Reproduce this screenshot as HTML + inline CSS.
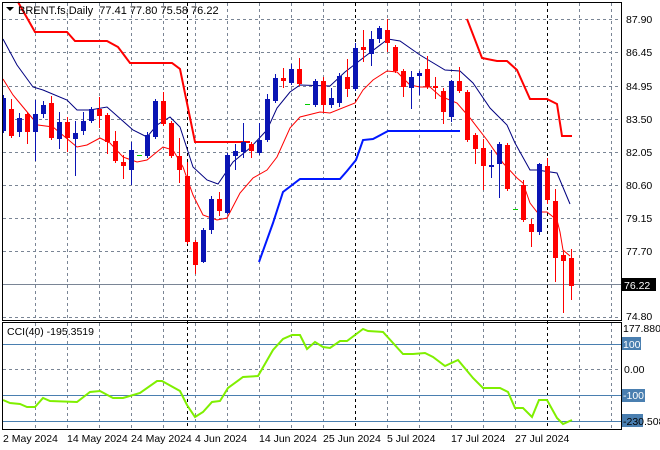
<!DOCTYPE html>
<html><head><meta charset="utf-8"><style>
html,body{margin:0;padding:0;background:#fff;}
svg{display:block;font-family:"Liberation Sans",sans-serif;}
</style></head><body>
<svg width="660" height="450" viewBox="0 0 660 450" xmlns="http://www.w3.org/2000/svg">
<rect width="660" height="450" fill="#fff"/>
<g stroke="#7a8595" stroke-width="1" stroke-dasharray="3,3" shape-rendering="crispEdges">
<path d="M35.5 3V320M67.5 3V320M99.5 3V320M131.5 3V320M163.5 3V320M195.5 3V320M227.5 3V320M259.5 3V320M291.5 3V320M323.5 3V320M387.5 3V320M419.5 3V320M451.5 3V320M483.5 3V320M515.5 3V320M579.5 3V320M611.5 3V320"/>
<path d="M35.5 323V429M67.5 323V429M99.5 323V429M131.5 323V429M163.5 323V429M195.5 323V429M227.5 323V429M259.5 323V429M291.5 323V429M323.5 323V429M387.5 323V429M419.5 323V429M451.5 323V429M483.5 323V429M515.5 323V429M579.5 323V429M611.5 323V429"/>
<path d="M3 19.5H621M3 52.5H621M3 86.5H621M3 119.5H621M3 152.5H621M3 185.5H621M3 218.5H621M3 251.5H621M3 317.5H621M3 369.5H621"/>
</g>
<g stroke="#000" stroke-dasharray="3,3" shape-rendering="crispEdges">
<path d="M187.5 3V429M355.5 3V429M547.5 3V429"/>
</g>
<path d="M3 284.5H621" stroke="#7a8595" shape-rendering="crispEdges"/>
<g stroke="#4a7fb0" shape-rendering="crispEdges"><path d="M3 344.5H621M3 395.5H621M3 421.5H621"/></g>
<polyline fill="none" stroke="#f00" stroke-width="2" points="18,2 35,32 67,32 75,41 107,41 118,47 130,63 172,63 180,69 195,142 250,142"/>
<polyline fill="none" stroke="#f00" stroke-width="2" points="467,19 482,58 497,61 507,61 517,70 530,99 547,99 557,104 562,136 572,136"/>
<polyline fill="none" stroke="#0018ff" stroke-width="2" points="259,262 273,223 283,192 300,179 340,179 347,171 356,160 363,140 373,139 388,131 460,131"/>
<polyline fill="none" stroke="#000080" stroke-width="1" points="3,39 17,65 33,87 43,90 67,100 77,110 90,110 107,107 133,130 147,137 157,125 170,117 180,127 193,167 207,180 218,184 233,162 250,148 267,130 277,108 290,92 300,85 330,86 345,72 363,58 388,39 400,41 420,55 445,70 460,71 473,83 490,108 507,125 515,143 530,170 537,170 557,173 570,204"/>
<polyline fill="none" stroke="#f00" stroke-width="1" points="3,79 13,95 23,107 38,125 53,127 65,137 77,147 87,145 100,138 110,143 123,157 137,162 147,160 163,147 173,150 183,167 193,195 203,215 217,220 227,218 240,193 253,178 267,170 277,157 290,128 300,117 320,112 330,113 355,103 363,90 373,80 387,71 397,72 410,85 420,87 430,87 440,96 457,103 470,118 487,140 503,163 517,178 523,183 530,203 537,212 547,212 557,220 560,232 563,250 570,256"/>
<g shape-rendering="crispEdges">
<g stroke="#f00" fill="#f00">
<path d="M11.5 99V138M27.5 112V144M51.5 96V140M67.5 117V152M99.5 97V128M107.5 113V154M115.5 131V163M123.5 155V179M163.5 92V126M171.5 121V158M179.5 138V183M187.5 162V244M195.5 240V274M219.5 192V216M251.5 142V158M283.5 68V88M299.5 58V86M323.5 77V112M347.5 59V97M363.5 30V62M387.5 19V52M395.5 45V73M403.5 69V97M427.5 56V89M435.5 77V99M443.5 88V124M459.5 67V93M467.5 90V142M475.5 133V164M483.5 139V190M507.5 143V191M523.5 180V222M531.5 219V247M547.5 158V204M555.5 189V282M563.5 250V313M571.5 249V300"/>
</g>
<g fill="#f00">
<rect x="9" y="109" width="5" height="27"/><rect x="25" y="114" width="5" height="18"/><rect x="49" y="103" width="5" height="35"/><rect x="65" y="122" width="5" height="16"/><rect x="97" y="109" width="5" height="7"/><rect x="105" y="115" width="5" height="27"/><rect x="113" y="141" width="5" height="20"/><rect x="121" y="162" width="5" height="4"/><rect x="161" y="101" width="5" height="23"/><rect x="169" y="123" width="5" height="33"/><rect x="177" y="156" width="5" height="14"/><rect x="185" y="176" width="5" height="66"/><rect x="193" y="242" width="5" height="23"/><rect x="217" y="199" width="5" height="12"/><rect x="249" y="144" width="5" height="7"/><rect x="281" y="78" width="5" height="3"/><rect x="297" y="69" width="5" height="15"/><rect x="321" y="81" width="5" height="24"/><rect x="345" y="77" width="5" height="12"/><rect x="361" y="47" width="5" height="3"/><rect x="385" y="30" width="5" height="13"/><rect x="393" y="47" width="5" height="24"/><rect x="401" y="71" width="5" height="16"/><rect x="425" y="69" width="5" height="18"/><rect x="433" y="86" width="5" height="2"/><rect x="441" y="91" width="5" height="21"/><rect x="457" y="81" width="5" height="10"/><rect x="465" y="92" width="5" height="48"/><rect x="473" y="135" width="5" height="14"/><rect x="481" y="148" width="5" height="18"/><rect x="505" y="145" width="5" height="44"/><rect x="521" y="185" width="5" height="35"/><rect x="529" y="224" width="5" height="8"/><rect x="545" y="166" width="5" height="34"/><rect x="553" y="201" width="5" height="57"/><rect x="561" y="255" width="5" height="6"/><rect x="569" y="258" width="5" height="28"/>
</g>
<g stroke="#0a14b4">
<path d="M3.5 95V133M19.5 113V137M35.5 100V161M43.5 101V118M59.5 112V149M75.5 121V176M83.5 112V135M91.5 107V123M131.5 142V185M147.5 132V158M155.5 99V139M203.5 228V263M211.5 196V234M227.5 153V214M235.5 144V170M243.5 123V158M259.5 123V155M267.5 94V142M275.5 74V103M291.5 64V85M315.5 79V107M331.5 88V108M339.5 73V107M355.5 43V91M371.5 31V66M379.5 26V43M411.5 71V109M419.5 71V95M451.5 80V122M491.5 150V178M499.5 142V198M539.5 163V235"/>
</g>
<g fill="#0a14b4">
<rect x="2" y="98" width="4" height="33"/><rect x="17" y="118" width="5" height="14"/><rect x="33" y="114" width="5" height="18"/><rect x="41" y="105" width="5" height="9"/><rect x="57" y="122" width="5" height="17"/><rect x="73" y="133" width="5" height="6"/><rect x="81" y="121" width="5" height="10"/><rect x="89" y="109" width="5" height="12"/><rect x="129" y="150" width="5" height="20"/><rect x="145" y="135" width="5" height="21"/><rect x="153" y="101" width="5" height="36"/><rect x="201" y="230" width="5" height="32"/><rect x="209" y="199" width="5" height="31"/><rect x="225" y="155" width="5" height="58"/><rect x="233" y="151" width="5" height="5"/><rect x="241" y="142" width="5" height="10"/><rect x="257" y="140" width="5" height="13"/><rect x="265" y="99" width="5" height="41"/><rect x="273" y="78" width="5" height="23"/><rect x="289" y="69" width="5" height="14"/><rect x="313" y="81" width="5" height="24"/><rect x="329" y="98" width="5" height="7"/><rect x="337" y="76" width="5" height="27"/><rect x="353" y="48" width="5" height="41"/><rect x="369" y="39" width="5" height="15"/><rect x="377" y="28" width="5" height="11"/><rect x="409" y="77" width="5" height="11"/><rect x="417" y="73" width="5" height="3"/><rect x="449" y="81" width="5" height="36"/><rect x="489" y="165" width="5" height="2"/><rect x="497" y="144" width="5" height="20"/><rect x="537" y="164" width="5" height="68"/>
</g>
<g fill="#00cc00"><rect x="137" y="155" width="5" height="1"/><rect x="305" y="104" width="5" height="1"/><rect x="513" y="209" width="5" height="1"/></g>
</g>
<polyline fill="none" stroke="#7fef00" stroke-width="2" points="3,400 10,403 20,404 27,407 35,407 43,398 50,401 77,402 90,392 100,391 113,398 123,398 140,393 157,381 162,381 180,391 187,405 195,417 203,412 212,402 220,401 228,388 243,377 258,376 273,350 283,339 292,335 300,335 307,349 315,342 323,347 330,348 340,341 347,341 363,329 368,331 383,332 403,354 413,354 425,353 433,357 445,366 458,360 473,378 483,388 500,388 508,392 515,408 523,408 532,417 539,400 547,400 557,418 563,424 572,420"/>
<g fill="none" stroke="#000" shape-rendering="crispEdges">
<rect x="2.5" y="2.5" width="619" height="318"/>
<rect x="2.5" y="322.5" width="619" height="107"/>
</g>
<path d="M6 7h8l-4 4z" fill="#000"/>
<text x="18" y="14" font-size="11" fill="#000" xml:space="preserve">BRENT.fs,Daily  77.41 77.80 75.58 76.22</text>
<text x="7" y="335" font-size="10.5" fill="#000">CCI(40) -195.3519</text>
<g font-size="10.5" fill="#000">
<text x="626" y="23">87.90</text><text x="626" y="56">86.45</text><text x="626" y="90">84.95</text><text x="626" y="123">83.50</text><text x="626" y="156">82.05</text><text x="626" y="189">80.60</text><text x="626" y="222">79.15</text><text x="626" y="255">77.70</text><text x="626" y="320">74.80</text>
</g>
<rect x="621" y="278" width="35" height="13" fill="#000"/>
<text x="624" y="289" font-size="10.5" fill="#fff">76.22</text>
<g font-size="10.5" fill="#000">
<text x="623" y="332">177.8808</text><text x="624" y="373">0.00</text>
</g>
<rect x="622" y="337" width="19" height="13" fill="#4a7fb0"/><text x="623" y="348" font-size="10.5" fill="#fff">100</text>
<rect x="622" y="389" width="23" height="13" fill="#4a7fb0"/><text x="623" y="399" font-size="10.5" fill="#fff">-100</text>
<rect x="622" y="414" width="21" height="13" fill="#4a7fb0"/><text x="623" y="425" font-size="10.5" fill="#000">-230.508</text>
<g font-size="10.5" fill="#000">
<text x="3" y="442">2 May 2024</text><text x="67" y="442">14 May 2024</text><text x="131" y="442">24 May 2024</text><text x="195" y="442">4 Jun 2024</text><text x="259" y="442">14 Jun 2024</text><text x="323" y="442">25 Jun 2024</text><text x="387" y="442">5 Jul 2024</text><text x="451" y="442">17 Jul 2024</text><text x="515" y="442">27 Jul 2024</text>
</g>
</svg>
</body></html>
